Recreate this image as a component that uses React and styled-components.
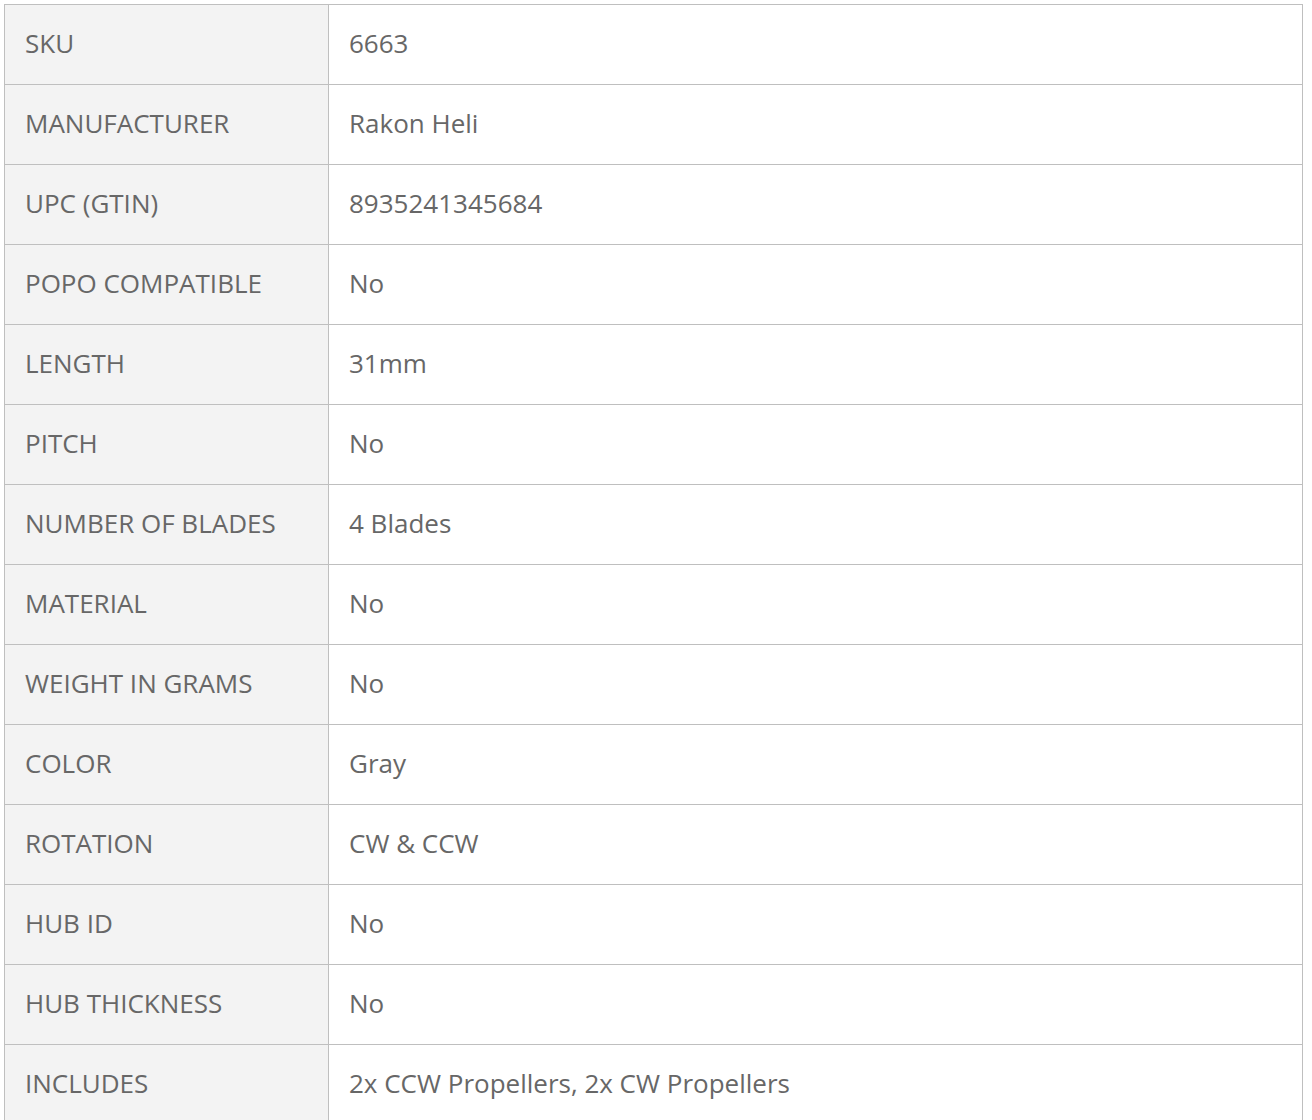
import React from "react";
import styled, { createGlobalStyle } from "styled-components";

const GlobalStyle = createGlobalStyle`
  body {
    margin: 0;
    background: #fff;
    font-family: "Open Sans", "Liberation Sans", sans-serif;
  }
`;

const specs = [
  ["SKU", "6663"],
  ["MANUFACTURER", "Rakon Heli"],
  ["UPC (GTIN)", "8935241345684"],
  ["POPO COMPATIBLE", "No"],
  ["LENGTH", "31mm"],
  ["PITCH", "No"],
  ["NUMBER OF BLADES", "4 Blades"],
  ["MATERIAL", "No"],
  ["WEIGHT IN GRAMS", "No"],
  ["COLOR", "Gray"],
  ["ROTATION", "CW & CCW"],
  ["HUB ID", "No"],
  ["HUB THICKNESS", "No"],
  ["INCLUDES", "2x CCW Propellers, 2x CW Propellers"],
];

const App = () => {
  return (
    <Page>
      <GlobalStyle />
      <SpecTable>
        <tbody>
          {specs.map(([label, value]) => (
            <tr key={label}>
              <LabelCell>{label}</LabelCell>
              <ValueCell>{value}</ValueCell>
            </tr>
          ))}
        </tbody>
      </SpecTable>
    </Page>
  );
};

const Page = styled.div`
  padding: 4px;
`;

const SpecTable = styled.table`
  width: 1299px;
  border-collapse: collapse;
  table-layout: fixed;
  border: 1px solid #bfbfbf;
`;

const Cell = styled.td`
  height: 80px;
  box-sizing: border-box;
  border: 1px solid #bfbfbf;
  vertical-align: middle;
  font-size: 26px;
  color: #676767;
  padding: 0 20px 4px;
  white-space: nowrap;
`;

const LabelCell = styled(Cell)`
  width: 324px;
  background: #f3f3f3;
`;

const ValueCell = styled(Cell)`
  background: #fff;
`;

export default App;
